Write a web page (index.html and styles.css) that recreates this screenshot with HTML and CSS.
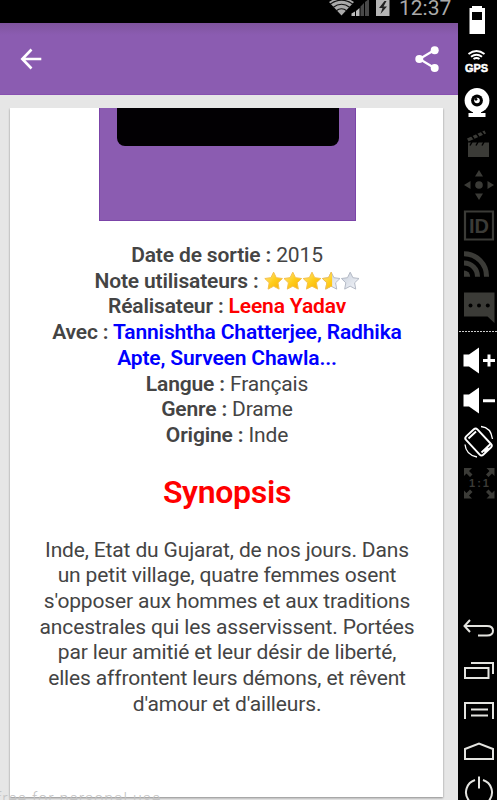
FILE: index.html
```html
<!DOCTYPE html>
<html lang="fr">
<head>
    <meta charset="UTF-8">
    <meta name="viewport" content="width=device-width, initial-scale=1.0">
    <title>Synopsis</title>
    <link rel="stylesheet" href="styles.css">
</head>
<body>
    <div class="phone">
        <!-- Status bar -->
        <div class="status-bar">
            <svg class="status-icons" width="64" height="23" viewBox="0 0 64 23">
                <path d="M0 2Q12.500-6.500 25 2L12.500 15.500Z" fill="#aaa"/>
                <g fill="none" stroke="#111" stroke-width="1.200">
                    <path d="M1 4.200Q12.500-3.800 24 4.200"/>
                    <path d="M4 7.500Q12.500 1 21 7.500"/>
                    <path d="M7 11Q12.500 6.500 18 11"/>
                </g>
                <path d="M22.500 16v-2.500l3.500-2V16z" fill="#bbb"/>
                <path d="M27 16v-5l3.500-3v8z" fill="#bbb"/>
                <path d="M31.500 16V6.500L35 3v13zM36 16V2l4-3v17z" fill="#484848"/>
                <path d="M47 0h13.500v16H47z" fill="#b5b5b5"/>
                <path d="M55.500 1l-5.500 7h3.500l-2 6 6.500-7.500h-3.500l3-5.500z" fill="#222"/>
            </svg>
            <span class="clock">12:37</span>
        </div>

        <!-- Toolbar -->
        <div class="toolbar">
            <svg width="22" height="22" viewBox="0 0 22 22" fill="none" stroke="#fff" stroke-width="2.600">
                <path d="M11.500 1.500L2.300 11l9.200 9.500M2.300 11h19"/>
            </svg>
            <svg width="24" height="26" viewBox="0 0 24 26" fill="#fff">
                <path d="M19.500 4L4.500 13l15 9" fill="none" stroke="#fff" stroke-width="2.200"/>
                <circle cx="19.700" cy="4.200" r="4"/>
                <circle cx="4.300" cy="13" r="4"/>
                <circle cx="19.700" cy="22" r="4"/>
            </svg>
        </div>

        <!-- Movie card -->
        <div class="content">
            <div class="card">
                <div class="poster">
                    <div class="poster-inner"></div>
                </div>
                <div class="infos">
                    <b>Date de sortie :</b> 2015<br>
                    <b>Note utilisateurs :</b> <svg class="stars" width="96" height="20" viewBox="0 0 96 20">
                        <defs>
                            <linearGradient id="gold" x1="0" y1="0" x2="1" y2="1">
                                <stop offset="0" stop-color="#ffe98a"/>
                                <stop offset="0.500" stop-color="#ffce1c"/>
                                <stop offset="1" stop-color="#f9ad00"/>
                            </linearGradient>
                            <linearGradient id="silver" x1="0" y1="0" x2="1" y2="1">
                                <stop offset="0" stop-color="#c9d0dc"/>
                                <stop offset="1" stop-color="#f4f6fa"/>
                            </linearGradient>
                            <clipPath id="half"><path d="M0 0h10.500v20H0z"/></clipPath>
                            <path id="star" d="M9.600 1.200l2.700 5.500 6.100.8-4.400 4.300 1.100 6.300-5.500-2.900-5.500 2.900 1.100-6.300L.8 7.500l6.100-.8z" stroke-linejoin="round"/>
                        </defs>
                        <use href="#star" fill="url(#gold)" stroke="#f5c04a"/>
                        <use href="#star" x="19.200" fill="url(#gold)" stroke="#f5c04a"/>
                        <use href="#star" x="38.400" fill="url(#gold)" stroke="#f5c04a"/>
                        <g transform="translate(57.600)">
                            <use href="#star" fill="url(#silver)" stroke="#b4bac6"/>
                            <use href="#star" fill="url(#gold)" stroke="#f5c04a" clip-path="url(#half)"/>
                        </g>
                        <use href="#star" x="76.600" fill="url(#silver)" stroke="#b4bac6"/>
                    </svg><br>
                    <b>Réalisateur : <span class="red">Leena Yadav</span></b><br>
                    <b>Avec : <span class="blue">Tannishtha Chatterjee, Radhika<br>Apte, Surveen Chawla...</span></b><br>
                    <b>Langue :</b> Français<br>
                    <b>Genre :</b> Drame<br>
                    <b>Origine :</b> Inde
                </div>
                <h1>Synopsis</h1>
                <p>
                    Inde, Etat du Gujarat, de nos jours. Dans<br>
                    un petit village, quatre femmes osent<br>
                    s'opposer aux hommes et aux traditions<br>
                    ancestrales qui les asservissent. Portées<br>
                    par leur amitié et leur désir de liberté,<br>
                    elles affrontent leurs démons, et rêvent<br>
                    d'amour et d'ailleurs.
                </p>
            </div>
        </div>
        <div class="watermark">free for personal use</div>
    </div>

    <!-- Emulator tools -->
    <div class="sidebar">
        <svg viewBox="0 0 39 41" fill="#fff">
            <path d="M14 6h10v2h3v26H11.500V8H14zM14 12v8h10v-8z" fill-rule="evenodd"/>
        </svg>
        <svg viewBox="0 0 39 41" fill="none" stroke="#fff" stroke-width="2">
            <path d="M10.500 13q8-6 16 0M13 15.700q5.500-4 11 0M15.500 18q3-2 6 0"/>
            <text class="gps" x="18.500" y="30.500">GPS</text>
        </svg>
        <svg viewBox="0 0 39 41" fill="#fff">
            <circle cx="19" cy="18.500" r="12.400"/>
            <circle cx="19" cy="18.500" r="5.900" fill="#000"/>
            <circle cx="19" cy="18.500" r="2.800"/>
            <circle cx="18" cy="17.300" r="1.400" fill="#000"/>
            <path d="M15 29h8v2h4.500v4h-17v-4H15z"/>
        </svg>
        <svg viewBox="0 0 39 41" fill="#3b3b37">
            <path d="M10 19.500h21V34H10zM9 15.500l17.500-8 1.500 3-17.500 8z"/>
            <path d="M14 19l-2 3.500M20 19l-2 3.500M26 19l-2 3.500M13 12l3 4M18 10l3 4M23 8l3 4" stroke="#000" stroke-width="1.500"/>
        </svg>
        <svg viewBox="0 0 39 41" fill="#3b3b37">
            <circle cx="21" cy="21" r="3.800"/>
            <path d="M21 6l4 6.500h-8zM21 36l4-6.500h-8zM6 21l6.500-4v8zM36 21l-6.500-4v8z"/>
        </svg>
        <svg viewBox="0 0 39 41" fill="#3b3b37">
            <path d="M7 6.500h28v28H7z" fill="none" stroke="#3b3b37" stroke-width="2.200"/>
            <text class="id" x="21" y="28">ID</text>
        </svg>
        <svg viewBox="0 0 39 41" fill="none" stroke="#3b3b37" stroke-width="5">
            <path d="M6 7.700a22.500 22.500 0 0 1 22.500 23M6 17a13.500 13.500 0 0 1 13.500 13.700"/>
            <path d="M6 24.500a6.200 6.200 0 0 1 6.200 6.200H6z" fill="#3b3b37" stroke="none"/>
        </svg>
        <svg viewBox="0 0 39 41" fill="#3b3b37">
            <path d="M6 5.500h30.500v30.500l-7-6.500H6z"/>
            <g fill="#000"><circle cx="12.500" cy="18.500" r="2"/><circle cx="21" cy="18.500" r="2"/><circle cx="29.800" cy="18.500" r="2"/></g>
        </svg>
        <div class="divider"></div>
        <svg viewBox="0 0 39 41" fill="#fff">
            <path d="M5.500 14.500H11l10-7v26l-10-7H5.500zM25 19h4.500v-4.500h3V19H37v3h-4.500v4.500h-3V22H25z"/>
        </svg>
        <svg viewBox="0 0 39 41" fill="#fff">
            <path d="M5.500 13.500H11l10-7v26l-10-7H5.500zM25 18.300h12v3H25z"/>
        </svg>
        <svg viewBox="0 0 39 41" fill="none" stroke="#fff" stroke-width="1.900">
            <rect x="12.800" y="7.500" width="15.500" height="25" rx="2.500" transform="rotate(-43 20.500 20)"/>
            <path d="M10.500 16.500l7.500-7M23.500 30.500l9-8.500M26.500 30l4-4"/>
            <path d="M23 4.500q10 1 11.500 12.500M7 22.500q1 10.500 12 12.500" stroke-width="1.300"/>
        </svg>
        <svg viewBox="0 0 39 41" fill="#3b3b37">
            <path d="M6 5h8l-3 3 3.500 3.500-2.500 2.500-3.500-3.500L6 13zM36.500 5h-8l3 3-3.500 3.500 2.500 2.500 3.500-3.500 2.500 2.500zM6 35.500h8l-3-3 3.500-3.500-2.500-2.500L8.500 30 6 27.500zM36.500 35.500h-8l3-3-3.500-3.500 2.500-2.500L34 30l2.500-2.500z"/>
            <text class="ratio" x="22" y="24">1:1</text>
        </svg>
        <svg class="nav" viewBox="0 0 39 41">
            <path d="M12 12L6.500 18l5.500 6M6.500 18H29q6 0 6 4.800t-6 4.800h-9"/>
        </svg>
        <svg viewBox="0 0 39 41">
            <path d="M7 19h23.500v10H7zM13 14h22v11"/>
        </svg>
        <svg viewBox="0 0 39 41">
            <path d="M7 29V13h28v16M13 19.500h17M13 25.500h17"/>
        </svg>
        <svg viewBox="0 0 39 41">
            <path d="M7 18l14-5.500L35 18v10H7z"/>
        </svg>
        <svg viewBox="0 0 39 41">
            <path d="M21 4.500v12M17 8a13 13 0 1 0 8 0"/>
        </svg>
    </div>
</body>
</html>
```

FILE: styles.css
```css
* {
    box-sizing: border-box;
}

body {
    margin: 0;
    height: 800px;
    display: flex;
    overflow: hidden;
    background: #000;
    font-family: Roboto, "Liberation Sans", sans-serif;
}

.phone {
    position: relative;
    width: 458px;
    height: 800px;
    display: flex;
    flex-direction: column;
    overflow: hidden;
    background: #e6e6e6;
}

.status-bar {
    height: 23px;
    flex: none;
    display: flex;
    justify-content: flex-end;
    gap: 6px;
    padding-right: 8px;
    background: #000;
}

.clock {
    width: 51px;
    color: #aaa;
    font-size: 21px;
    line-height: 16px;
    white-space: nowrap;
}

.toolbar {
    height: 72px;
    flex: none;
    display: flex;
    align-items: center;
    justify-content: space-between;
    padding: 0 19px 0 20px;
    background: linear-gradient(#7f549e, #8b5cb1 12px);
    border-bottom: 1px solid #8750b0;
}

.content {
    padding: 13px 15px 0 10px;
}

.card {
    height: 689px;
    padding-left: 1px;
    background: #fff;
    color: #444;
    text-align: center;
    font-size: 21px;
    line-height: 25.700px;
    letter-spacing: -0.150px;
    box-shadow: 0 1px 2px rgba(0, 0, 0, 0.4);
    clip-path: inset(0 -3px -5px -3px);
}

.poster {
    width: 257px;
    height: 113px;
    margin: 0 auto;
    padding: 0 16px 0 17px;
    background: #8b5cb1;
    border: 1px solid #7b44a8;
    border-top: 0;
}

.poster-inner {
    height: 38px;
    background: #020003;
    border-radius: 0 0 8px 8px;
}

.infos {
    padding-top: 22px;
    white-space: nowrap;
}

b {
    font-weight: 600;
}

.stars {
    vertical-align: -3px;
}

.red {
    color: #f00;
}

.blue {
    color: #00f;
}

h1 {
    margin: 24px 0 27px;
    color: #f00;
    font-size: 32px;
    font-weight: 600;
    line-height: 38px;
    letter-spacing: -0.300px;
}

p {
    margin: 0;
    white-space: nowrap;
}

.watermark {
    position: absolute;
    left: -4px;
    top: 789px;
    color: #c4c4c4;
    font-size: 16px;
    font-weight: 300;
    line-height: 19px;
    letter-spacing: 1px;
    white-space: nowrap;
}

.sidebar {
    width: 39px;
    height: 800px;
    display: flex;
    flex-direction: column;
    overflow: hidden;
    background: #000;
}

.sidebar svg {
    width: 39px;
    height: 41px;
    flex: none;
}

.divider {
    height: 12px;
    flex: none;
    margin-left: 1px;
    background: repeating-linear-gradient(90deg, #ccc 0 2px, #000 2px 3px) 0 3px / 100% 1px no-repeat;
}

.sidebar .nav {
    margin-top: 104px;
}

.nav, .nav ~ svg {
    fill: none;
    stroke: #e4e4e0;
    stroke-width: 2;
}

.sidebar text {
    font-family: "Liberation Sans", sans-serif;
    font-weight: 700;
    text-anchor: middle;
}

.gps {
    fill: #fff;
    stroke: #fff;
    stroke-width: 0.5px;
    font-size: 11px;
}

.id {
    font-size: 20px;
}

.ratio {
    font-size: 11px;
    letter-spacing: 2px;
}
```
